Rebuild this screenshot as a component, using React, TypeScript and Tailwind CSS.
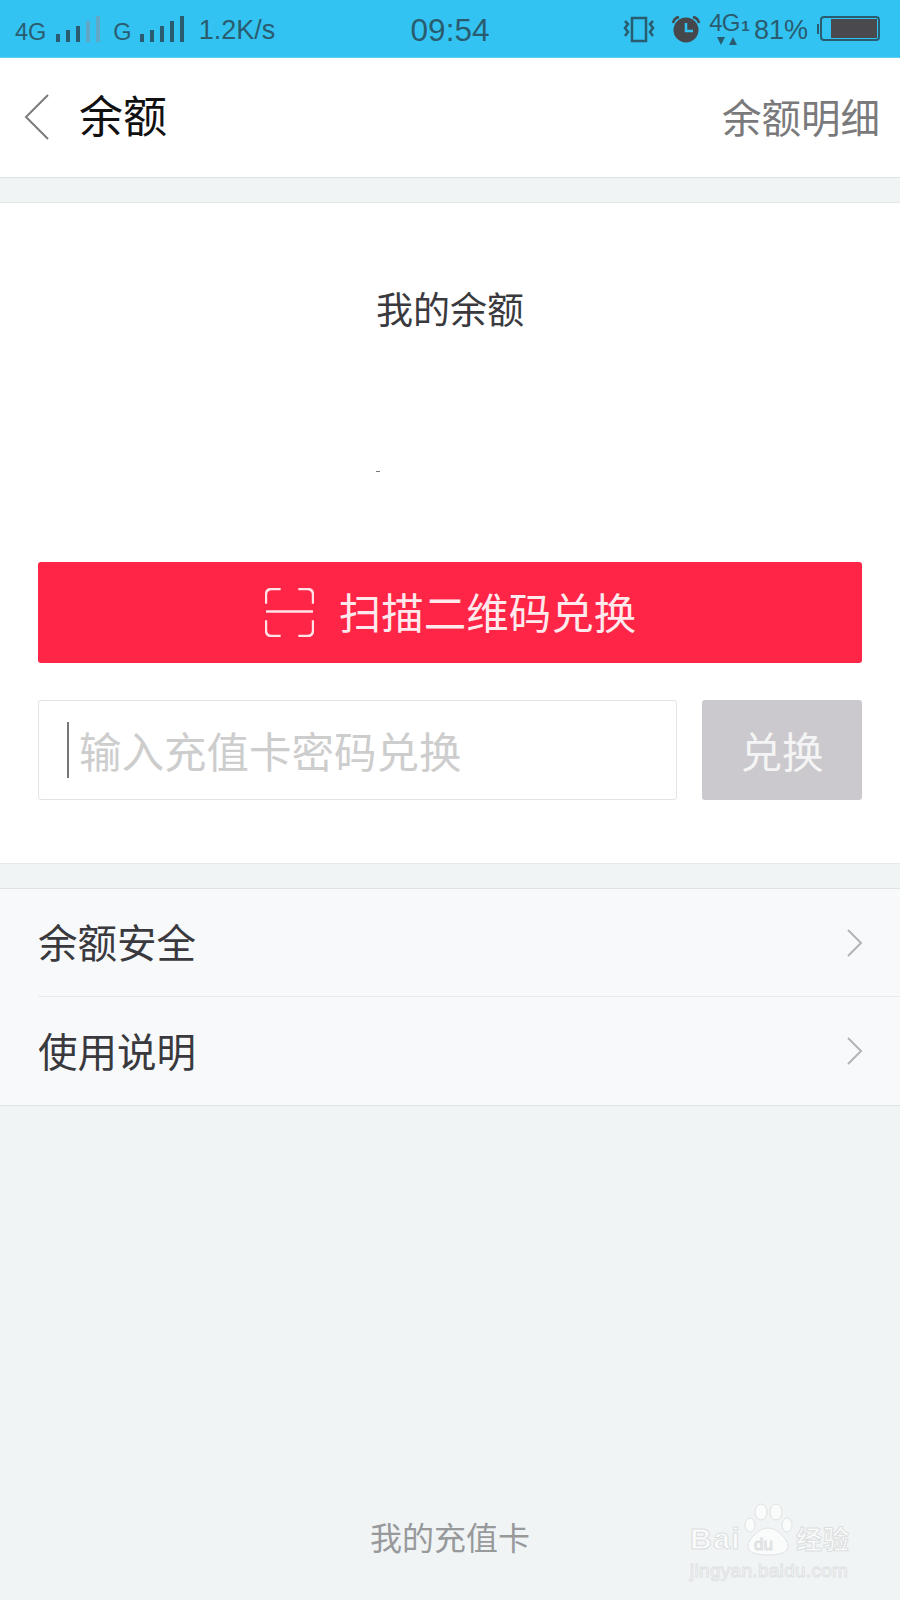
const cjk = "font-['Liberation_Sans','Noto_Sans_CJK_SC',sans-serif]";

function Signal({ faded = 0 }: { faded?: number }) {
  const heights = [8, 12, 16, 21, 26];
  return (
    <div className="flex items-end gap-[6px] h-[26px]">
      {heights.map((h, i) => (
        <div
          key={h}
          className={i >= heights.length - faded ? "w-[4px] bg-[#5fa9c6]" : "w-[4px] bg-[#2a5c70]"}
          style={{ height: h }}
        />
      ))}
    </div>
  );
}

function StatusBar() {
  return (
    <div className="flex h-[58px] items-center bg-[#33c3f2] text-[#2a5c70] border-b border-[#5ccdf2]">
      <div className="flex flex-1 items-center pl-[15px] pr-[5px]">
        <span className="text-[23.5px] leading-none mt-[8px]">4G</span>
        <div className="ml-[10px] mt-[1px]">
          <Signal faded={2} />
        </div>
        <span className="ml-[13px] text-[23.5px] leading-none mt-[8px]">G</span>
        <div className="ml-[8px] mt-[1px]">
          <Signal />
        </div>
        <span className="ml-[15px] mt-[4px] text-[27px] leading-none">1.2K/s</span>
      </div>
      <span className="mt-[4px] text-[31.5px] leading-none">09:54</span>
      <div className="flex flex-1 items-center justify-end pr-[20px]">
        <svg width="34" height="28" viewBox="0 0 34 28" fill="none" stroke="#2a5c70" strokeWidth="2.5">
          <rect x="10" y="3" width="14" height="23" />
          <path d="M3 6l3 3-3 4 3 4-3 4" />
          <path d="M31 6l-3 3 3 4-3 4 3 4" />
        </svg>
        <svg className="ml-[15px] mr-[1px]" width="30" height="28" viewBox="0 0 30 28">
          <circle cx="15" cy="15" r="12.5" fill="#46474b" />
          <path d="M15 8v8h7" fill="none" stroke="#33c3f2" strokeWidth="2.5" />
          <path d="M2 8q1-5 6-6M28 8q-1-5-6-6" fill="none" stroke="#46474b" strokeWidth="2.5" />
        </svg>
        <div className="ml-[8px] flex flex-col items-center w-[38px]">
          <span className="text-[24px] leading-[22px] tracking-[-1px]">
            4G<span className="text-[15px] font-bold ml-[2px]">1</span>
          </span>
          <svg width="22" height="8" viewBox="0 0 22 8" fill="#2a5c70" className="mr-[4px]">
            <path d="M1 0h8L5 8zM13 8h8l-4-8z" />
          </svg>
        </div>
        <span className="ml-[6px] mt-[4px] text-[27px] leading-none">81%</span>
        <div className="ml-[9px] h-[10px] w-[2px] bg-[#2a5c70]" />
        <div className="ml-[1px] flex h-[25px] w-[60px] rounded-[4px] border-2 border-[#2a5c70] py-[1px] pl-[9px] pr-[1px]">
          <div className="flex-1 bg-[#4a4a4e]" />
        </div>
      </div>
    </div>
  );
}

function NavBar() {
  return (
    <div className="flex h-[120px] items-center border-b border-[#dfe2e3] bg-white pb-[2px]">
      <svg className="ml-[24px]" width="26" height="46" viewBox="0 0 26 46" fill="none" stroke="#7b7b7b" strokeWidth="2">
        <path d="M24 1L2 23l22 22" />
      </svg>
      <span className="ml-[29px] mt-[2px] text-[44px] leading-none text-[#111]">余额</span>
      <span className="ml-auto mr-[20px] mt-[6px] text-[39.5px] leading-none text-[#7a7a7c]">余额明细</span>
    </div>
  );
}

function ScanIcon() {
  return (
    <svg className="ml-[1px]" width="49" height="49" viewBox="0 0 50 50" fill="none" stroke="#ffe3e7" strokeWidth="2.5">
      <path d="M16 1H7Q1 1 1 7v9" />
      <path d="M34 1h9q6 0 6 6v9" />
      <path d="M1 24h48" />
      <path d="M1 33v10q0 6 6 6h9" />
      <path d="M49 33v10q0 6-6 6H34" />
    </svg>
  );
}

function ListRow({ label, divider }: { label: string; divider?: boolean }) {
  return (
    <div className="pl-[38px]">
      <div className={divider ? "flex h-[108px] items-center border-b border-[#e8eaeb] pr-[37px]" : "flex h-[108px] items-center pr-[37px]"}>
        <span className="mt-[5px] text-[39.5px] leading-none text-[#3a3a3e]">{label}</span>
        <svg className="ml-auto" width="16" height="28" viewBox="0 0 16 28" fill="none" stroke="#b2b4b6" strokeWidth="2">
          <path d="M1 1l13 13L1 27" />
        </svg>
      </div>
    </div>
  );
}

function Watermark() {
  return (
    <div className="absolute left-[690px] top-[1502px] h-[78px] w-[165px] text-white">
      <svg className="absolute left-[48px] top-0" width="62" height="54" viewBox="0 0 62 54" fill="#fafbfb" stroke="#dfe2e3" strokeWidth="1">
        <ellipse cx="23" cy="10" rx="6" ry="8" />
        <ellipse cx="38" cy="10" rx="6" ry="8" />
        <ellipse cx="12" cy="23" rx="5" ry="7" />
        <ellipse cx="49" cy="23" rx="5" ry="7" />
        <path d="M30 26c10 0 20 12 20 18s-6 9-20 9-20-3-20-9 10-18 20-18z" />
      </svg>
      <span className="absolute left-0 top-[22px] font-bold text-[30px] leading-none tracking-[1.5px] text-[#fafbfb] [-webkit-text-stroke:1px_#dcdfe0]">Bai</span>
      <span className="absolute left-[64px] top-[34px] text-[17px] leading-none text-[#f0f4f5] [-webkit-text-stroke:1px_#dcdfe0]">du</span>
      <span className="absolute left-[106px] top-[25px] text-[26px] font-bold leading-none tracking-[1px] text-[#fafbfb] [-webkit-text-stroke:1px_#dcdfe0]">经验</span>
      <span className="absolute left-0 top-[59px] whitespace-nowrap text-[19px] leading-none tracking-[0.3px] text-[#fafbfb] [-webkit-text-stroke:1px_#dfe2e3]">jingyan.baidu.com</span>
    </div>
  );
}

export default function App() {
  return (
    <div className={`relative flex h-[1600px] w-[900px] flex-col overflow-hidden bg-[#f0f4f5] ${cjk}`}>
      <StatusBar />
      <NavBar />

      <div className="mt-[24px] flex h-[662px] flex-col border-y border-[#e6e8e9] bg-white px-[38px]">
        <p className="mt-[90px] text-center text-[37px] leading-none text-[#3a3a3e]">我的余额</p>
        <div className="ml-[338px] mt-[141px] h-[1px] w-[4px] bg-[#777]" />
        <button className="mt-[90px] flex h-[101px] w-full items-center justify-center gap-[25px] rounded-[3px] bg-[#ff2546] text-[42.5px] leading-none text-[#ffe9ec]">
          <ScanIcon />
          <span className="mt-[5px]">扫描二维码兑换</span>
        </button>
        <div className="mt-[37px] flex h-[100px] gap-[25px]">
          <div className="flex flex-1 items-center rounded-[3px] border border-[#e3e3e3] pl-[28px]">
            <div className="h-[56px] w-[2px] bg-[#777]" />
            <span className="ml-[10px] mt-[8px] text-[42.5px] leading-none text-[#cdcdcd]">输入充值卡密码兑换</span>
          </div>
          <button className="flex w-[160px] items-center justify-center rounded-[3px] bg-[#cbc9cd] text-[41.5px] leading-none text-[#f4f4f5]">
            <span className="mt-[7px]">兑换</span>
          </button>
        </div>
      </div>

      <div className="mt-[24px] border-y border-[#dfe2e3] bg-[#f8f9fb]">
        <ListRow label="余额安全" divider />
        <ListRow label="使用说明" />
      </div>

      <p className="mt-auto mb-[45px] text-center text-[32px] leading-none text-[#98999b]">我的充值卡</p>
      <Watermark />
    </div>
  );
}
